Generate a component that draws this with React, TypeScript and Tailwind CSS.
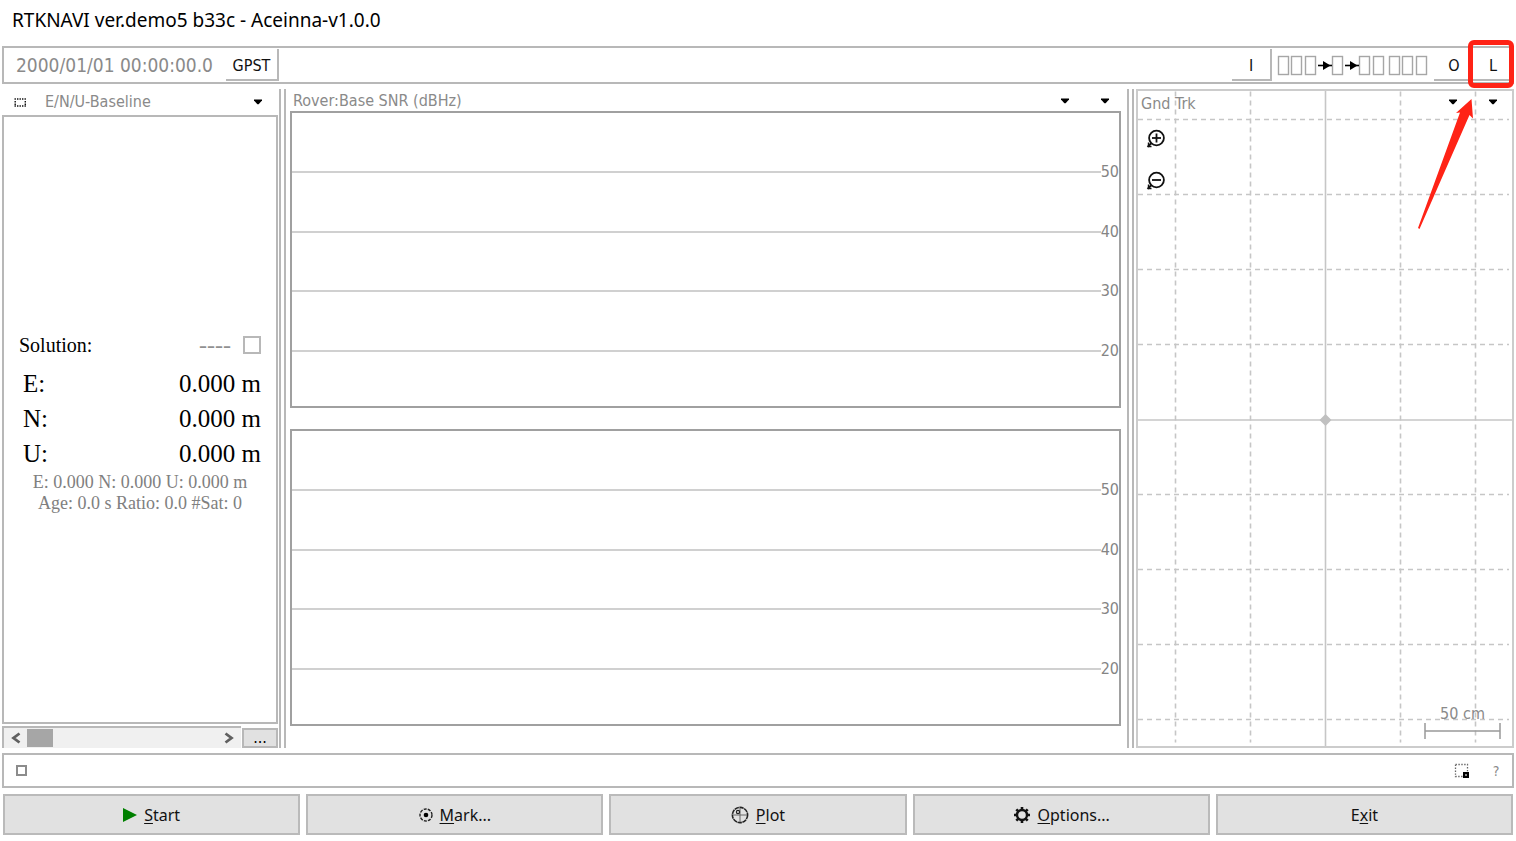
import type { ReactNode } from 'react';

const LEVELS = [50, 40, 30, 20];
const GRID_X = [-150, -75, 75, 150];
const GRID_Y = [-300, -225, -150, -75, 75, 150, 225, 300];
const BASELINE = [
  { axis: 'E', value: '0.000 m' },
  { axis: 'N', value: '0.000 m' },
  { axis: 'U', value: '0.000 m' },
];
// x positions of the stream state boxes in the toolbar
const STREAMS = [1, 14, 28, 55, 82, 96, 112, 125, 139];

function CaretButton({ label }: { label: string }) {
  return (
    <button aria-label={label} className="w-10 h-6 flex items-center justify-center">
      <svg width="10" height="6" viewBox="0 0 10 6">
        <path d="M1 0.5H9V1.5L5.6 5.2H4.4L1 1.5Z" fill="#000" />
      </svg>
    </button>
  );
}

function StreamFlow() {
  return (
    <svg width="152" height="22" viewBox="0 0 152 22" className="shrink-0">
      {STREAMS.map((x) => (
        <rect key={x} x={x + 0.5} y="2.5" width="10" height="18" fill="none" stroke="#a6a6a6" strokeWidth="1.4" />
      ))}
      {[41, 68].map((x) => (
        <g key={x} transform={`translate(${x} 1)`}>
          <path d="M0 10.5H14" stroke="#000" strokeWidth="1.6" />
          <path d="M5 6L12.500 10.500L5 15Z" fill="#000" />
        </g>
      ))}
    </svg>
  );
}

function SnrPlot() {
  return (
    <div className="h-[297px] border-2 border-[#a0a0a0] flex flex-col">
      <div className="flex-1 -mb-1 flex flex-col justify-evenly">
        {LEVELS.map((level) => (
          <div key={level} className="h-0 flex items-center">
            <div className="flex-1 h-0.5 bg-[#d0d0d0]" />
            <span className="leading-5 text-[#858585]">{level}</span>
          </div>
        ))}
      </div>
    </div>
  );
}

function ZoomIcon({ plus }: { plus?: boolean }) {
  return (
    <svg width="20" height="20" viewBox="0 0 20 20" fill="none" stroke="#111" strokeWidth="1.8">
      <circle cx="10.5" cy="9" r="7.4" />
      <path d="M6 9H15" />
      {plus && <path d="M10.5 4.500V13.500" />}
      <path d="M5.500 14L1.500 18" strokeWidth="2" />
      <path d="M2.500 13.500V16.500M3 17.500H5.500" strokeWidth="1.4" />
    </svg>
  );
}

function GroundTrack() {
  return (
    <div className="relative w-[378px] shrink-0 border-2 border-[#cccccc] overflow-hidden">
      <svg width="100%" height="100%" className="absolute inset-0">
        <svg x="50%" y="50%" overflow="visible" stroke="#c6c6c6" strokeWidth="1.6">
          {GRID_X.map((x) => (
            <path key={x} d={`M${x + 0.5} -327V324`} strokeDasharray="5 4" />
          ))}
          {GRID_Y.map((y) => (
            <path key={y} d={`M-187 ${y + 1}H184`} strokeDasharray="5 4" />
          ))}
          <path d="M0.500 -400V400M-400 1.500H400" />
          <path d="M0.500 -4.500L6.500 1.500L0.500 7.500L-5.500 1.500Z" fill="#c0c0c0" stroke="none" />
        </svg>
      </svg>
      <div className="relative h-full flex flex-col justify-between">
        <div>
          <div className="flex justify-between">
            <h2 className="pl-[3px] pt-[3px] leading-5 text-[#8a8a8a]">Gnd Trk</h2>
            <div className="flex -mt-px -mr-px">
              <CaretButton label="Track type" />
              <CaretButton label="Plot type" />
            </div>
          </div>
          <div className="flex flex-col items-start gap-[22px] pl-2 pt-[15px]">
            <button aria-label="Zoom in"><ZoomIcon plus /></button>
            <button aria-label="Zoom out"><ZoomIcon /></button>
          </div>
        </div>
        <div className="self-end w-[77px] mr-[11px] mb-1.5 text-center text-[#8a8a8a]">
          <div className="leading-4">50 cm</div>
          <svg width="77" height="18" viewBox="0 0 77 18" fill="none" stroke="#999" strokeWidth="1.5">
            <path d="M1 1V17M76 1V17M1 9H76" />
          </svg>
        </div>
      </div>
    </div>
  );
}

function BaselinePanel() {
  return (
    <section className="w-[276px] shrink-0 flex flex-col">
      <div className="h-[26px] flex items-center">
        <button aria-label="Toggle panels" className="px-3">
          <svg width="12" height="9" viewBox="0 0 12 9">
            <path d="M0.500 1H12M0.500 8H12" stroke="#111" strokeWidth="1.4" strokeDasharray="1.400 1.100" />
            <path d="M1.200 3V7M11.300 3V7" stroke="#111" strokeWidth="1.4" strokeDasharray="1.400 1.100" />
          </svg>
        </button>
        <h2 className="flex-1 pl-[7px] text-[#8a8a8a]">E/N/U-Baseline</h2>
        <CaretButton label="Solution type" />
      </div>
      <div className="flex-1 border-2 border-[#b8b8b8] flex flex-col justify-center pl-[15px] pr-[15px] pb-[3px] font-['Palatino_Linotype','Liberation_Serif',serif] text-black">
        <label className="h-11 flex items-center text-xl">
          <span className="flex-1">Solution:</span>
          <span className="text-[#909090] text-2xl leading-6">----</span>
          <input type="checkbox" className="appearance-none ml-3 w-[18px] h-[18px] border-2 border-[#b8b8b8]" />
        </label>
        {BASELINE.map(({ axis, value }) => (
          <div key={axis} className="h-[35px] flex items-center justify-between pl-1 text-[25px]">
            <span>{axis}:</span>
            <span>{value}</span>
          </div>
        ))}
        <p className="text-center text-lg leading-[21px] text-[#808080] whitespace-nowrap">
          E: 0.000 N: 0.000 U: 0.000 m
          <br />
          Age: 0.0 s Ratio: 0.0 #Sat: 0
        </p>
      </div>
      <div className="mt-0.5 h-[22px] flex justify-between">
        <div className="w-[239px] border-t-2 border-l-2 border-[#b8b8b8] bg-[#f0f0f0] flex items-center">
          <button aria-label="Scroll left" className="w-[23px] h-5 flex items-center justify-center">
            <svg width="12" height="12" viewBox="0 0 12 12"><path d="M9.500 1.500L3.500 6L9.500 10.500" fill="none" stroke="#606060" strokeWidth="2.8" /></svg>
          </button>
          <div className="w-[26px] h-[18px] bg-[#a6a6a6]" />
          <button aria-label="Scroll right" className="ml-auto w-6 h-5 flex items-center justify-center">
            <svg width="12" height="12" viewBox="0 0 12 12"><path d="M2.500 1.500L8.500 6L2.500 10.500" fill="none" stroke="#606060" strokeWidth="2.8" /></svg>
          </button>
        </div>
        <button className="w-9 h-5 mt-0.5 border-2 border-[#b8b8b8] bg-[#e1e1e1] leading-4 text-black">...</button>
      </div>
    </section>
  );
}

function ActionButton({ icon, children }: { icon?: ReactNode; children: ReactNode }) {
  return (
    <button className="flex-1 h-[41px] border-2 border-[#bababa] bg-[#e1e1e1] flex items-center justify-center gap-[7px] font-['Segoe_UI','Noto_Sans',sans-serif] text-base text-[#111]">
      {icon}
      <span>{children}</span>
    </button>
  );
}

const Key = ({ children }: { children: string }) => <span className="underline underline-offset-2">{children}</span>;

const startIcon = (
  <svg width="14" height="16" viewBox="0 0 14 16"><path d="M0 1L14 8L0 15Z" fill="#008000" /></svg>
);
const markIcon = (
  <svg width="14" height="14" viewBox="0 0 14 14">
    <circle cx="7" cy="7" r="6" fill="none" stroke="#222" strokeWidth="1.4" strokeDasharray="3 1.2" />
    <circle cx="7" cy="7" r="2.3" fill="#000" />
  </svg>
);
const plotIcon = (
  <svg width="18" height="18" viewBox="0 0 18 18" fill="none" stroke="#222">
    <circle cx="9" cy="9" r="7.6" strokeWidth="1.6" strokeDasharray="4.4 0.6" />
    <path d="M9 2V16M2 9H16" strokeWidth="1" stroke="#666" />
    <circle cx="7" cy="6" r="1.6" strokeWidth="1.2" />
  </svg>
);
const optionsIcon = (
  <svg width="18" height="18" viewBox="0 0 18 18" fill="none" stroke="#111">
    <circle cx="9" cy="9" r="5" strokeWidth="2.4" />
    <path d="M9 1V4M9 14V17M1 9H4M14 9H17M3.3 3.3L5.4 5.4M12.6 12.6L14.7 14.7M14.7 3.3L12.6 5.4M5.4 12.6L3.3 14.7" strokeWidth="2.6" />
  </svg>
);

export default function App() {
  return (
    <div className="relative min-h-screen flex flex-col bg-white px-0.5 pb-[6px] font-[Tahoma,'DejaVu_Sans_Condensed','DejaVu_Sans',sans-serif] text-base overflow-hidden">
      <h1 className="h-[46px] pl-[10px] pt-[6px] leading-7 font-['Segoe_UI','Noto_Sans',sans-serif] text-[19px] text-black">
        RTKNAVI ver.demo5 b33c - Aceinna-v1.0.0
      </h1>

      {/* Toolbar */}
      <div className="h-[38px] border-2 border-[#b8b8b8] flex items-center">
        <span className="w-[222px] pl-3 text-[19px] text-[#8a8a8a]">2000/01/01 00:00:00.0</span>
        <button className="w-[53px] h-8 pt-[3px] border-r-2 border-b-2 border-[#b8b8b8] text-[#111]">GPST</button>
        <button className="ml-auto w-10 h-8 pt-[3px] border-r-2 border-b-2 border-[#b8b8b8] text-[#111]">I</button>
        <div className="px-[5px]"><StreamFlow /></div>
        <button className="w-10 h-8 pt-[3px] border-b-2 border-[#b8b8b8] text-[#111]">O</button>
        <button className="w-[38px] h-8 pt-[3px] border-b-2 border-[#b8b8b8] text-[#111]">L</button>
      </div>

      <main className="mt-[5px] flex-1 flex">
        <BaselinePanel />
        <div className="w-[7px] shrink-0 border-x-2 border-[#b8b8b8] ml-px" />
        <section className="flex-1 min-w-0 px-[3px] ml-px">
          <div className="h-[22px] pt-0.5 flex items-center justify-between">
            <h2 className="pl-[3px] text-[#8a8a8a]">Rover:Base SNR (dBHz)</h2>
            <div className="flex -mr-1">
              <CaretButton label="Signal" />
              <CaretButton label="SNR type" />
            </div>
          </div>
          <div className="flex flex-col gap-[21px]">
            <SnrPlot />
            <SnrPlot />
          </div>
        </section>
        <div className="w-[7px] shrink-0 border-x-2 border-[#b8b8b8] mx-[2px] ml-[3px]" />
        <GroundTrack />
      </main>

      {/* Status bar */}
      <div className="mt-[5px] h-[35px] border-2 border-[#b8b8b8] flex items-center justify-between pl-3 pr-[10px]">
        <span className="w-[11px] h-[11px] border-2 border-[#8c8c8c]" />
        <div className="flex items-center gap-5">
          <button aria-label="Minimize to tray">
            <svg width="16" height="16" viewBox="0 0 16 16">
              <rect x="1.5" y="1.5" width="12" height="12" fill="none" stroke="#666" strokeWidth="1.3" strokeDasharray="1.4 1.5" />
              <rect x="10" y="10" width="4" height="4" fill="#888" stroke="#000" strokeWidth="2" />
            </svg>
          </button>
          <button aria-label="About" className="w-3 text-sm text-[#8a8a8a]">?</button>
        </div>
      </div>

      <div className="mt-[6px] px-px flex gap-[6px]">
        <ActionButton icon={startIcon}><Key>S</Key>tart</ActionButton>
        <ActionButton icon={markIcon}><Key>M</Key>ark...</ActionButton>
        <ActionButton icon={plotIcon}><Key>P</Key>lot</ActionButton>
        <ActionButton icon={optionsIcon}><Key>O</Key>ptions...</ActionButton>
        <ActionButton>E<Key>x</Key>it</ActionButton>
      </div>

      {/* Callout on the log button */}
      <div className="absolute top-10 right-[2px] w-[46px] h-12 border-[5px] border-[#ff2316] rounded-md pointer-events-none" />
      <svg className="absolute top-24 right-10 pointer-events-none" width="60" height="136" viewBox="0 0 60 136">
        <path d="M55.500 3L57 22.500L53.500 19L3.500 133L2 132L44 16.500L40 17Z" fill="#ff2316" />
      </svg>
    </div>
  );
}
